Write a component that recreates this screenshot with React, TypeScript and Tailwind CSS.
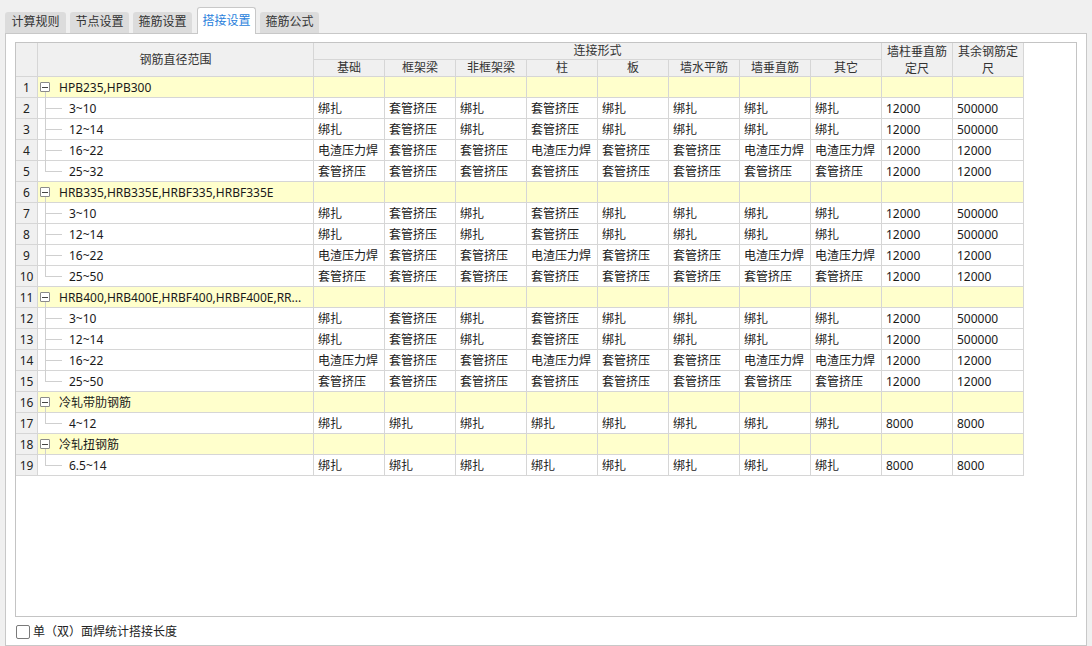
const tabs = ['计算规则', '节点设置', '箍筋设置', '搭接设置', '箍筋公式'];
const subCols = ['基础', '框架梁', '非框架梁', '柱', '板', '墙水平筋', '墙垂直筋', '其它'];

const A = ['绑扎', '套管挤压', '绑扎', '套管挤压', '绑扎', '绑扎', '绑扎', '绑扎', '12000', '500000'];
const B = ['电渣压力焊', '套管挤压', '套管挤压', '电渣压力焊', '套管挤压', '套管挤压', '电渣压力焊', '电渣压力焊', '12000', '12000'];
const C = ['套管挤压', '套管挤压', '套管挤压', '套管挤压', '套管挤压', '套管挤压', '套管挤压', '套管挤压', '12000', '12000'];
const D = ['绑扎', '绑扎', '绑扎', '绑扎', '绑扎', '绑扎', '绑扎', '绑扎', '8000', '8000'];

type Group = { name: string; items: { range: string; vals: string[] }[] };

const groups: Group[] = [
  {
    name: 'HPB235,HPB300',
    items: [
      { range: '3~10', vals: A },
      { range: '12~14', vals: A },
      { range: '16~22', vals: B },
      { range: '25~32', vals: C },
    ],
  },
  {
    name: 'HRB335,HRB335E,HRBF335,HRBF335E',
    items: [
      { range: '3~10', vals: A },
      { range: '12~14', vals: A },
      { range: '16~22', vals: B },
      { range: '25~50', vals: C },
    ],
  },
  {
    name: 'HRB400,HRB400E,HRBF400,HRBF400E,RR...',
    items: [
      { range: '3~10', vals: A },
      { range: '12~14', vals: A },
      { range: '16~22', vals: B },
      { range: '25~50', vals: C },
    ],
  },
  { name: '冷轧带肋钢筋', items: [{ range: '4~12', vals: D }] },
  { name: '冷轧扭钢筋', items: [{ range: '6.5~14', vals: D }] },
];

function NumCell({ n }: { n: number }) {
  return (
    <div className="w-[22px] shrink-0 border-r border-[#d6d6d6] bg-[#f0f0f0] pt-px text-center leading-[20px] text-[#222]">
      {n}
    </div>
  );
}

function GroupRow({ n, name }: { n: number; name: string }) {
  return (
    <div className="flex h-[21px] w-[1008px] border-b border-[#d6d6d6]">
      <NumCell n={n} />
      <div className="relative w-[276px] shrink-0 border-r border-[#d6d6d6] bg-[#ffffcc]">
        <span className="absolute left-[2px] top-[5px] flex h-[10px] w-[10px] items-center justify-center rounded-[1px] border border-[#8a8a8a] bg-white">
          <span className="h-px w-[6px] bg-[#444]" />
        </span>
        <span className="absolute left-[7px] top-[15px] bottom-0 w-px bg-[#cfcfcf]" />
        <div className="truncate pl-[21px] pr-[4px] pt-px leading-[20px] text-[#1a1a1a]">{name}</div>
      </div>
      {Array.from({ length: 10 }).map((_, i) => (
        <div key={i} className="w-[71px] shrink-0 border-r border-[#d6d6d6] bg-[#ffffcc]" />
      ))}
    </div>
  );
}

function ItemRow({ n, range, vals, last }: { n: number; range: string; vals: string[]; last: boolean }) {
  return (
    <div className="flex h-[21px] w-[1008px] border-b border-[#d6d6d6]">
      <NumCell n={n} />
      <div className="relative w-[276px] shrink-0 border-r border-[#d6d6d6] bg-white">
        <span className={`absolute left-[7px] top-[-1px] w-px bg-[#cfcfcf] ${last ? 'h-[11px]' : 'h-[21px]'}`} />
        <span className="absolute left-[7px] top-[10px] h-px w-[17px] bg-[#cfcfcf]" />
        <div className="pl-[31px] pt-px leading-[20px] text-[#1a1a1a]">{range}</div>
      </div>
      {vals.map((v, i) => (
        <div key={i} className="w-[71px] shrink-0 whitespace-nowrap border-r border-[#d6d6d6] bg-white pl-[4px] pt-px leading-[20px] text-[#1a1a1a]">
          {v}
        </div>
      ))}
    </div>
  );
}

export default function App() {
  let n = 0;
  const rows: React.ReactNode[] = [];
  groups.forEach((g) => {
    n += 1;
    rows.push(<GroupRow key={`g${n}`} n={n} name={g.name} />);
    g.items.forEach((it, idx) => {
      n += 1;
      rows.push(<ItemRow key={`r${n}`} n={n} range={it.range} vals={it.vals} last={idx === g.items.length - 1} />);
    });
  });

  return (
    <div className="flex h-[646px] w-[1092px] flex-col overflow-hidden bg-[#f0f0f0] font-[family-name:'Noto_Sans','Noto_Sans_CJK_SC',sans-serif] text-[12px]">
      <div className="flex h-[33px] shrink-0 items-end gap-[4px] pl-[5px]">
        {tabs.map((t, i) =>
          i === 3 ? (
            <div
              key={t}
              className="relative z-10 -mb-px ml-px flex h-[27px] w-[59px] items-center justify-center rounded-t-[3px] border border-b-0 border-[#c8c8c8] bg-white pb-[1px] text-[#2a7fdc]"
            >
              {t}
            </div>
          ) : (
            <div
              key={t}
              className={`flex h-[21px] items-center justify-center rounded-t-[3px] bg-[#dcdcdc] pb-[1px] text-[#333] ${i === 0 ? 'w-[61px]' : 'w-[59px]'}`}
            >
              {t}
            </div>
          )
        )}
      </div>
      <div className="ml-[5px] flex w-[1082px] flex-1 flex-col border border-[#c8c8c8] bg-white pl-[9px] pt-[8px]">
        <div className="h-[575px] w-[1062px] border border-[#c4c4c4] bg-white">
          <div className="flex h-[34px] w-[1008px] border-b border-[#d6d6d6] bg-[#f0f0f0] text-[#333]">
            <div className="w-[22px] shrink-0 border-r border-[#d6d6d6]" />
            <div className="flex w-[276px] shrink-0 items-center justify-center border-r border-[#d6d6d6]">钢筋直径范围</div>
            <div className="flex w-[568px] shrink-0 flex-col">
              <div className="flex h-[17px] items-center justify-center border-b border-r border-[#d6d6d6] leading-[16px]">连接形式</div>
              <div className="flex flex-1">
                {subCols.map((c) => (
                  <div key={c} className="flex w-[71px] shrink-0 items-center justify-center border-r border-[#d6d6d6] leading-[16px]">
                    {c}
                  </div>
                ))}
              </div>
            </div>
            <div className="flex w-[71px] shrink-0 flex-col items-center justify-center border-r border-[#d6d6d6] leading-[17px]">
              <span>墙柱垂直筋</span>
              <span>定尺</span>
            </div>
            <div className="flex w-[71px] shrink-0 flex-col items-center justify-center border-r border-[#d6d6d6] leading-[17px]">
              <span>其余钢筋定</span>
              <span>尺</span>
            </div>
          </div>
          {rows}
        </div>
        <div className="mt-[6px] flex items-center">
          <span className="ml-[1px] h-[14px] w-[14px] rounded-[2px] border border-[#7a7a7a] bg-white" />
          <span className="ml-[3px] text-[#222]">单（双）面焊统计搭接长度</span>
        </div>
      </div>
    </div>
  );
}
